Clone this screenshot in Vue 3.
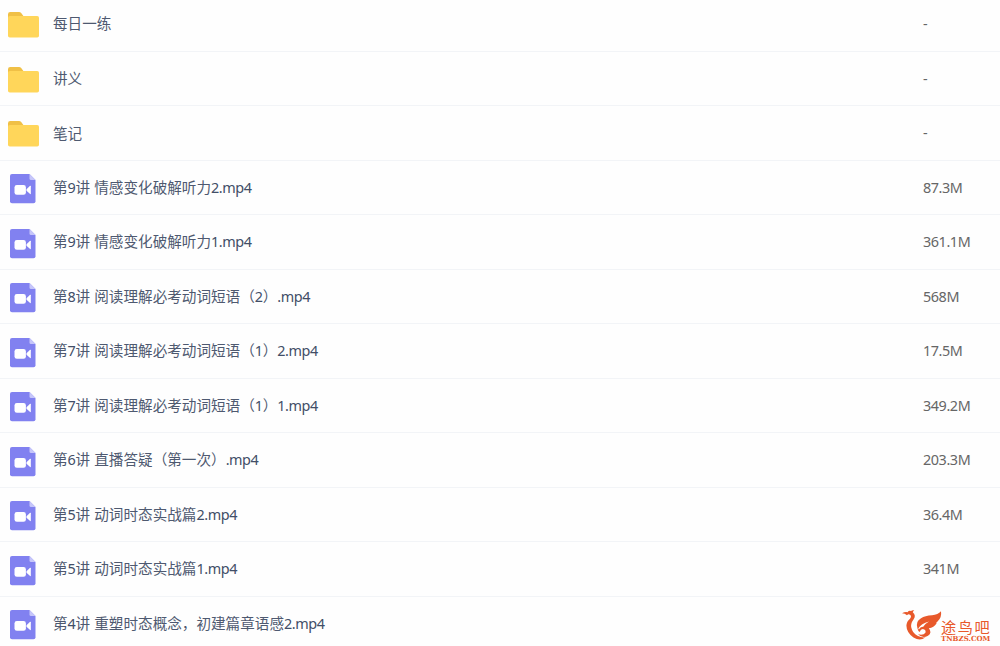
<template>
  <div class="file-list">
    <div v-for="file in files" :key="file.name" class="file-row">
      <div class="file-icon">
        <svg v-if="file.type === 'folder'" width="32" height="26" viewBox="0 0 32 26">
          <path d="M0 2.200Q0 0 2.200 0H11q1.400 0 2.200 1.100L15.400 4V9H0z" fill="#f0c046" />
          <rect y="4" width="31" height="21.500" rx="1.800" fill="#ffd65a" />
        </svg>
        <svg v-else class="video" width="26" height="30" viewBox="0 0 26 30">
          <path d="M2 0H19.500L25.500 6V27.200q0 2-2 2H2q-2 0-2-2V2Q0 0 2 0z" fill="#8181f0" />
          <path d="M19.500 0L25.500 6H21q-1.500 0-1.500-1.500z" fill="#c6c6fa" />
          <rect x="4.500" y="11" width="11.400" height="9.800" rx="2.400" fill="#fff" />
          <path d="M16.500 15.300L20.100 11.800Q20.800 11.400 20.800 12.200V19.600Q20.800 20.400 20.100 20L16.500 16.700z" fill="#fff" />
        </svg>
      </div>
      <div class="file-name">
        <span v-for="(part, i) in splitName(file.name)" :key="i" :class="{ latin: isLatin(part) }">{{ part }}</span>
      </div>
      <div class="file-size">{{ file.size }}</div>
    </div>

    <div class="site-mark">
      <svg width="42" height="34" viewBox="0 0 42 34">
        <g fill="#e8592b">
          <path d="M1 5.200Q4 3.600 6.500 4.200Q8 2.200 10 3Q11.500 1.800 13.300 2.500Q12 3.200 11.800 4.200Q15.500 7.500 12.500 11.500Q9.500 15.500 10.300 19.500Q11.500 25.300 16.500 27.800Q20.500 29.800 24.500 29.300Q19 33.800 12.500 29.500Q5.500 24.500 5.400 17.500Q5.600 13.500 9 10.700Q11 8.300 9 6.800Q7.500 5.600 6 7.200Q4 5.200 1 5.200z" />
          <path d="M16.500 20.500Q14 13.500 20 10.200Q24 7.800 31 7.300Q37 6.500 40 3.200Q41 9.500 36.500 13.500Q34.500 15 35.500 15.400Q33 19.600 27.800 20.200Q31.500 24.500 27 27.800Q21.500 31 17 26.300Q22.500 27.500 24.400 24.800Q25.400 21.800 21.800 21Q19.600 21 18.700 24Q17 23.200 16.500 20.500z" />
          <path d="M17.300 20.500Q20 15.500 28 13.400Q23.800 15.800 22 18.900Q19.500 18.600 17.800 21.500z" fill="#fefefe" />
        </g>
      </svg>
      <div class="mark-text">
        <div class="mark-title">途鸟吧</div>
        <div class="mark-domain">TNBZS.COM</div>
      </div>
    </div>
  </div>
</template>

<script setup>
const files = [
  { name: '每日一练', type: 'folder', size: '-' },
  { name: '讲义', type: 'folder', size: '-' },
  { name: '笔记', type: 'folder', size: '-' },
  { name: '第9讲 情感变化破解听力2.mp4', type: 'video', size: '87.3M' },
  { name: '第9讲 情感变化破解听力1.mp4', type: 'video', size: '361.1M' },
  { name: '第8讲 阅读理解必考动词短语（2）.mp4', type: 'video', size: '568M' },
  { name: '第7讲 阅读理解必考动词短语（1）2.mp4', type: 'video', size: '17.5M' },
  { name: '第7讲 阅读理解必考动词短语（1）1.mp4', type: 'video', size: '349.2M' },
  { name: '第6讲 直播答疑（第一次）.mp4', type: 'video', size: '203.3M' },
  { name: '第5讲 动词时态实战篇2.mp4', type: 'video', size: '36.4M' },
  { name: '第5讲 动词时态实战篇1.mp4', type: 'video', size: '341M' },
  { name: '第4讲 重塑时态概念，初建篇章语感2.mp4', type: 'video', size: '' }
]

// latin runs are set slightly tighter than the Chinese text
const splitName = (name) => name.match(/[\x20-\x7e]+|[^\x20-\x7e]+/g)
const isLatin = (part) => /^[\x20-\x7e]/.test(part)
</script>

<style>
body { background: #fff; overflow: hidden; }
</style>

<style scoped>
.file-list {
  position: relative;
  height: 646px;
  box-sizing: border-box;
  overflow: hidden;
  background: #fefefe;
  font-family: "Noto Sans CJK SC", sans-serif;
  font-size: 14.6px;
}
.file-row {
  display: flex;
  align-items: center;
  height: 54.5px;
  box-sizing: border-box;
  border-bottom: 1px solid #f2f4f7;
}
.file-row:first-child { height: 51.5px; padding-bottom: 4px; }
.file-icon {
  width: 46px;
  padding-left: 7.5px;
  box-sizing: border-box;
  flex-shrink: 0;
}
.file-icon svg { display: block; margin: 3px 0 0; }
.file-icon .video { margin: 4px 0 0 2px; }
.file-name {
  flex: 1;
  padding-left: 7px;
  color: #4e5970;
  line-height: 20px;
  white-space: pre;
}
.latin, .file-size {
  font-family: "Noto Sans", sans-serif;
  font-size: 14.4px;
  letter-spacing: -0.42px;
  word-spacing: 0.9px;
}
.latin { color: #424e67; }
.file-size { width: 77px; color: #666; }
.site-mark {
  position: absolute;
  left: 901px;
  top: 608px;
  display: flex;
  color: #e8592b;
}
.mark-text { margin-left: -2px; }
.mark-title {
  font-size: 15.2px;
  line-height: 22px;
  padding-top: 7px;
  letter-spacing: 1.6px;
  white-space: nowrap;
}
.mark-domain {
  font-family: "DejaVu Serif", serif;
  font-size: 7px;
  font-weight: 700;
  line-height: 8px;
  margin-top: -2px;
}
</style>
